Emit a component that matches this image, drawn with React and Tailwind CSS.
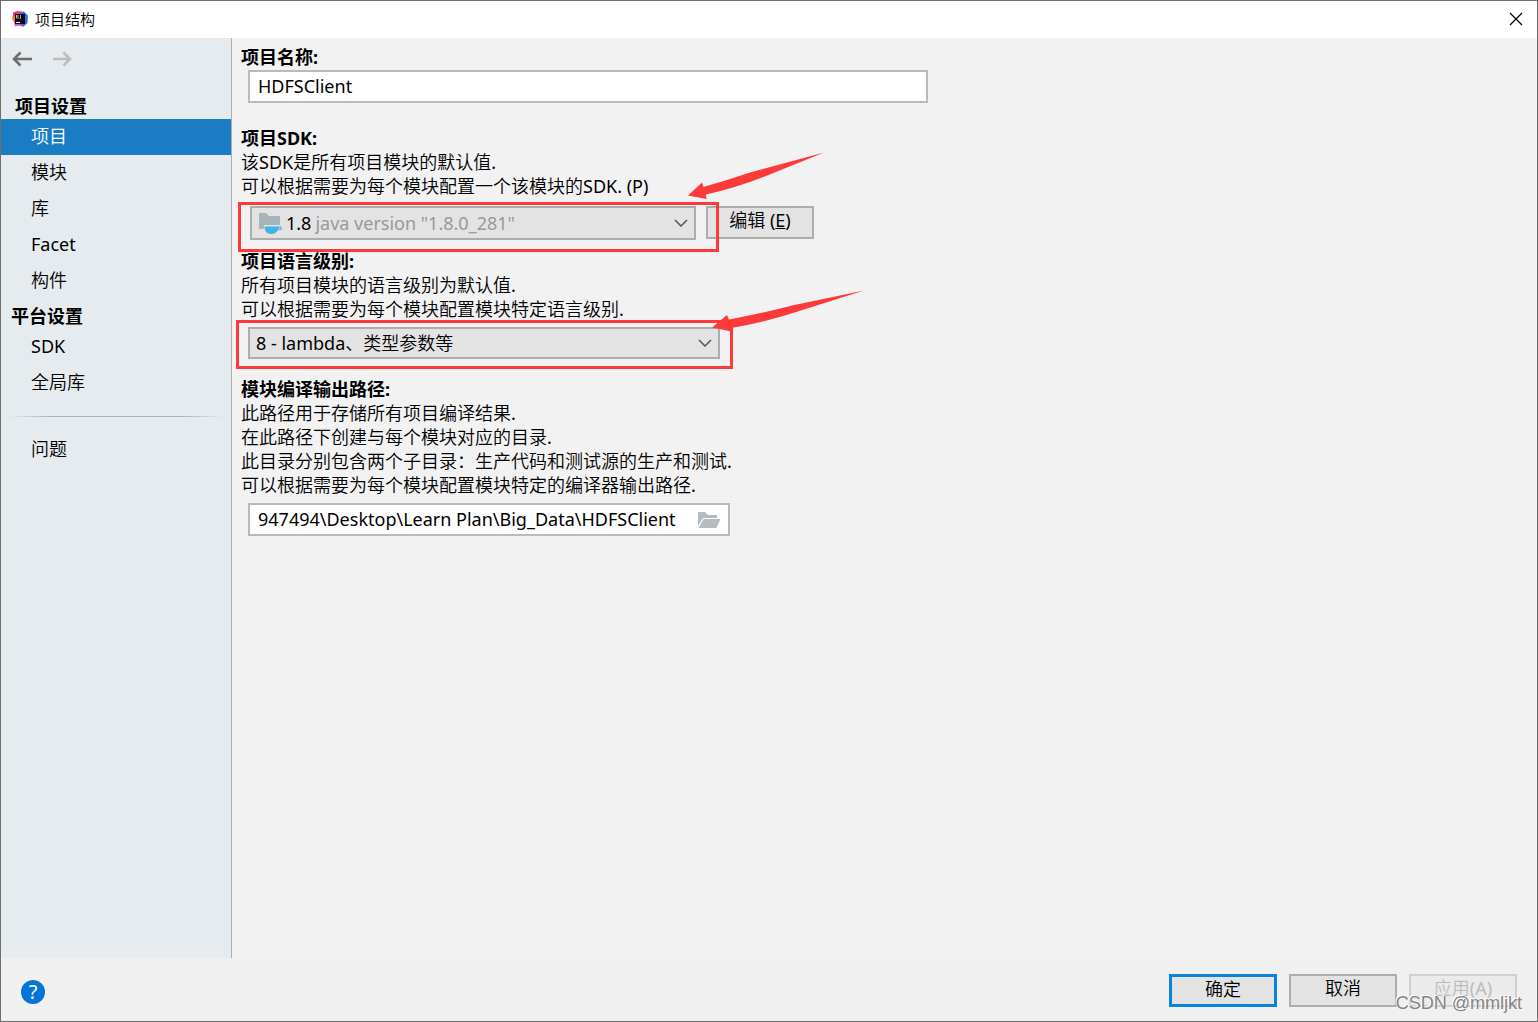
import clsx from "clsx";

const projectItems = ["项目", "模块", "库", "Facet", "构件"];
const platformItems = ["SDK", "全局库"];

function IdeaLogo() {
  return (
    <svg viewBox="0 0 16 16" className="w-4 h-4" aria-hidden="true">
      <path d="M1 1.5 5.5 0 9 3 6 8 1 7z" fill="#fc2d62" />
      <path d="M0 6 5 5 6 11 2.5 11.5.5 9z" fill="#f9772c" />
      <path d="M8 2 12 .5 15.8 4.5 15.5 12 11.5 15.8 8 14z" fill="#2f6bef" />
      <path d="M2 10 8 12 11.5 15.8 6 14.5 3 15.6z" fill="#c94ae0" />
      <path d="M8 2.5 5.5 0 12 .8z" fill="#a44bd8" />
      <path d="M3 3h10v10H3z" fill="#080808" />
      <path d="M4.5 4v3.500M6 4v3.500M8.500 4v3.500H7.500" stroke="#ccc" strokeWidth=".9" fill="none" />
      <path d="M4 11.400h4" stroke="#fff" strokeWidth="1" />
    </svg>
  );
}

function NavArrow({ forward }) {
  return (
    <svg viewBox="0 0 20 16" className="w-5 h-4" fill="none" stroke="currentColor" strokeWidth="2.600" aria-hidden="true">
      {forward ? <path d="M1 8h17M11.500 1.500L18 8l-6.500 6.500" /> : <path d="M20 8H2.500M8.500 1.500L2 8l6.500 6.500" />}
    </svg>
  );
}

function SdkIcon() {
  return (
    <svg viewBox="0 0 24 24" className="w-6 h-6 shrink-0" aria-hidden="true">
      <path d="M1 2h7l3 3h11v9H6v4H1z" fill="#a8b3ba" />
      <path d="M6.500 15.500H23.500V19H20C18.500 21.500 16.500 23 13.500 23 9.500 23 6.500 20.500 6.500 15.500z" fill="#40b6e0" />
      <path d="M20.800 16.700h1.500v1.200h-1.500z" fill="#e3e3e3" />
    </svg>
  );
}

function FolderOpenIcon() {
  return (
    <svg viewBox="0 0 24 18" className="w-6" aria-hidden="true">
      <path d="M1 1h7l3 3h9v3H6L1 15z" fill="#b4bcc2" />
      <path d="M6.500 8H23.500L19.500 17H1.500z" fill="#b4bcc2" />
    </svg>
  );
}

function Chevron() {
  return (
    <svg viewBox="0 0 14 8" className="w-[14px] h-2 shrink-0 pointer-events-none" fill="none" stroke="#555" strokeWidth="1.500" aria-hidden="true">
      <path d="M1 1l6 6 6-6" />
    </svg>
  );
}

function NavItem({ name, active }) {
  return (
    <a href="#" className={clsx("block h-9 leading-[34px] pl-[30px]", active && "bg-[#1a7dc4] text-white")}>
      {name}
    </a>
  );
}

function FieldTitle({ htmlFor, children }) {
  return (
    <label htmlFor={htmlFor} className="block font-bold font-['Noto_Sans','Noto_Sans_CJK_SC',sans-serif]">
      {children}
    </label>
  );
}

export default function App() {
  return (
    <div className="relative min-h-screen flex flex-col border border-[#6e6e6e] bg-[#f2f2f2] text-black text-[18px] leading-6 font-['Noto_Sans','Noto_Sans_CJK_SC_DemiLight','Noto_Sans_CJK_SC_Light','Noto_Sans_CJK_SC',sans-serif]">
      <header className="h-[37px] flex items-center justify-between bg-white pl-[11px] pr-[14px] pb-[2px]">
        <h1 className="flex items-center gap-[7px] text-[15px]">
          <IdeaLogo />
          项目结构
        </h1>
        <button aria-label="关闭">
          <svg viewBox="0 0 14 14" className="w-[14px] h-[14px]" stroke="#000" strokeWidth="1.200" aria-hidden="true">
            <path d="M1 1l12 12M13 1L1 13" />
          </svg>
        </button>
      </header>

      <div className="flex-1 flex">
        <aside className="w-[231px] shrink-0 bg-[#e6ebef] border-r border-[#adadad]">
          <div className="h-14 flex items-start gap-5 pt-[13px] pl-[11px]">
            <button aria-label="后退" className="text-[#6e6e6e]"><NavArrow /></button>
            <button aria-label="前进" className="text-[#bdbdbd]"><NavArrow forward /></button>
          </div>
          <nav>
            <h2 className="pl-[14px] h-[25px] font-bold font-['Noto_Sans','Noto_Sans_CJK_SC',sans-serif]">项目设置</h2>
            {projectItems.map((name) => <NavItem key={name} name={name} active={name === "项目"} />)}
            <h2 className="pl-[10px] h-[30px] leading-[34px] font-bold font-['Noto_Sans','Noto_Sans_CJK_SC',sans-serif]">平台设置</h2>
            {platformItems.map((name) => <NavItem key={name} name={name} />)}
            <div className="mx-2 my-[15px] h-px bg-[linear-gradient(to_right,transparent,#b0b0b0_20%,#b0b0b0_80%,transparent)]" />
            <NavItem name="问题" />
          </nav>
        </aside>

        <main className="flex-1 pl-[9px] pt-[7px]">
          <FieldTitle htmlFor="name">项目名称:</FieldTitle>
          <input id="name" defaultValue="HDFSClient" className="block ml-[7px] mt-px w-full max-w-[680px] h-[33px] px-2 pb-[2px] border-2 border-[#bababa] bg-white outline-none" />

          <section className="mt-[23px]">
            <FieldTitle htmlFor="sdk">项目SDK:</FieldTitle>
            <p>该SDK是所有项目模块的默认值.</p>
            <p>可以根据需要为每个模块配置一个该模块的SDK. (P)</p>
            <div className="flex items-start gap-[10px] mt-2 ml-[9px]">
              <div className="relative">
                <div className="w-[446px] h-[34px] flex items-center pl-[6px] pr-[6px] border-2 border-[#adadad] bg-[#e3e3e3]">
                  <SdkIcon />
                  <span className="ml-1 mr-1">1.8</span>
                  <select id="sdk" className="flex-1 appearance-none bg-transparent text-[#999] outline-none">
                    <option>java version "1.8.0_281"</option>
                  </select>
                  <Chevron />
                </div>
                <div className="absolute z-10 -left-3 -top-1 w-[481px] h-[50px] border-3 border-[#fc3a3a] pointer-events-none" />
                <svg viewBox="0 0 136 48" className="absolute z-10 left-[438px] -top-[54px] w-[136px] h-12 pointer-events-none" fill="#fc3a3a" aria-hidden="true">
                  <path d="M0 43.500 14 30.500 15.500 35Q40 28 62 20.500L136 .5 78 24Q48 36 18 42.500L18.500 47z" />
                </svg>
              </div>
              <button className="w-[108px] h-[33px] pb-[6px] border-2 border-[#adadad] bg-[#e3e3e3] leading-6">编辑 (<u>E</u>)</button>
            </div>
          </section>

          <section className="mt-[9px]">
            <FieldTitle htmlFor="level">项目语言级别:</FieldTitle>
            <p>所有项目模块的语言级别为默认值.</p>
            <p>可以根据需要为每个模块配置模块特定语言级别.</p>
            <div className="relative mt-[6px] ml-[7px]">
              <div className="w-[472px] h-8 flex items-center pl-[6px] pr-[6px] border-2 border-[#adadad] bg-[#e3e3e3]">
                <select id="level" className="flex-1 appearance-none bg-transparent outline-none">
                  <option>8 - lambda、类型参数等</option>
                </select>
                <Chevron />
              </div>
              <div className="absolute z-10 -left-3 -top-[7px] w-[497px] h-[49px] border-3 border-[#fc3a3a] pointer-events-none" />
              <svg viewBox="0 0 152 42" className="absolute z-10 left-[464px] -top-[37px] w-[152px] h-[42px] pointer-events-none" fill="#fc3a3a" aria-hidden="true">
                <path d="M0 37.500 15 25 17 29.500Q52 23 80 15.500L152 .5 92 19.500Q55 32 19 38L19.500 41.500z" />
              </svg>
            </div>
          </section>

          <section className="mt-[18px]">
            <FieldTitle htmlFor="output">模块编译输出路径:</FieldTitle>
            <p>此路径用于存储所有项目编译结果.</p>
            <p>在此路径下创建与每个模块对应的目录.</p>
            <p>此目录分别包含两个子目录：生产代码和测试源的生产和测试.</p>
            <p>可以根据需要为每个模块配置模块特定的编译器输出路径.</p>
            <div className="flex items-center ml-[7px] mt-[6px] w-[482px] h-[33px] pl-2 pr-[7px] border-2 border-[#bababa] bg-white">
              <input id="output" defaultValue="947494\Desktop\Learn Plan\Big_Data\HDFSClient" className="flex-1 min-w-0 pb-[2px] outline-none" />
              <button aria-label="浏览"><FolderOpenIcon /></button>
            </div>
          </section>
        </main>
      </div>

      <footer className="h-[63px] flex items-start justify-between bg-[#f0f0f0] pl-5 pr-5 pt-4">
        <button aria-label="帮助" className="mt-[6px] w-6 h-6 rounded-full bg-[#0375d8] text-white text-[20px] leading-6">?</button>
        <div className="flex gap-3">
          <button className="w-[108px] h-[33px] pb-[6px] border-3 border-[#0884e0] bg-[#e3e3e3] leading-6">确定</button>
          <button className="w-[108px] h-[33px] pb-[6px] border-2 border-[#adadad] bg-[#e3e3e3] leading-6">取消</button>
          <button disabled className="w-[108px] h-[33px] pb-[6px] border-2 border-[#d0d0d0] bg-[#ebebeb] text-[#bcbcbc] leading-6">应用(A)</button>
        </div>
      </footer>
      <div className="absolute right-[15px] bottom-[6px] text-[#858585] text-[18px] font-['Liberation_Sans',sans-serif] [text-shadow:-1px_-1px_0_#fff]">CSDN @mmljkt</div>
    </div>
  );
}
